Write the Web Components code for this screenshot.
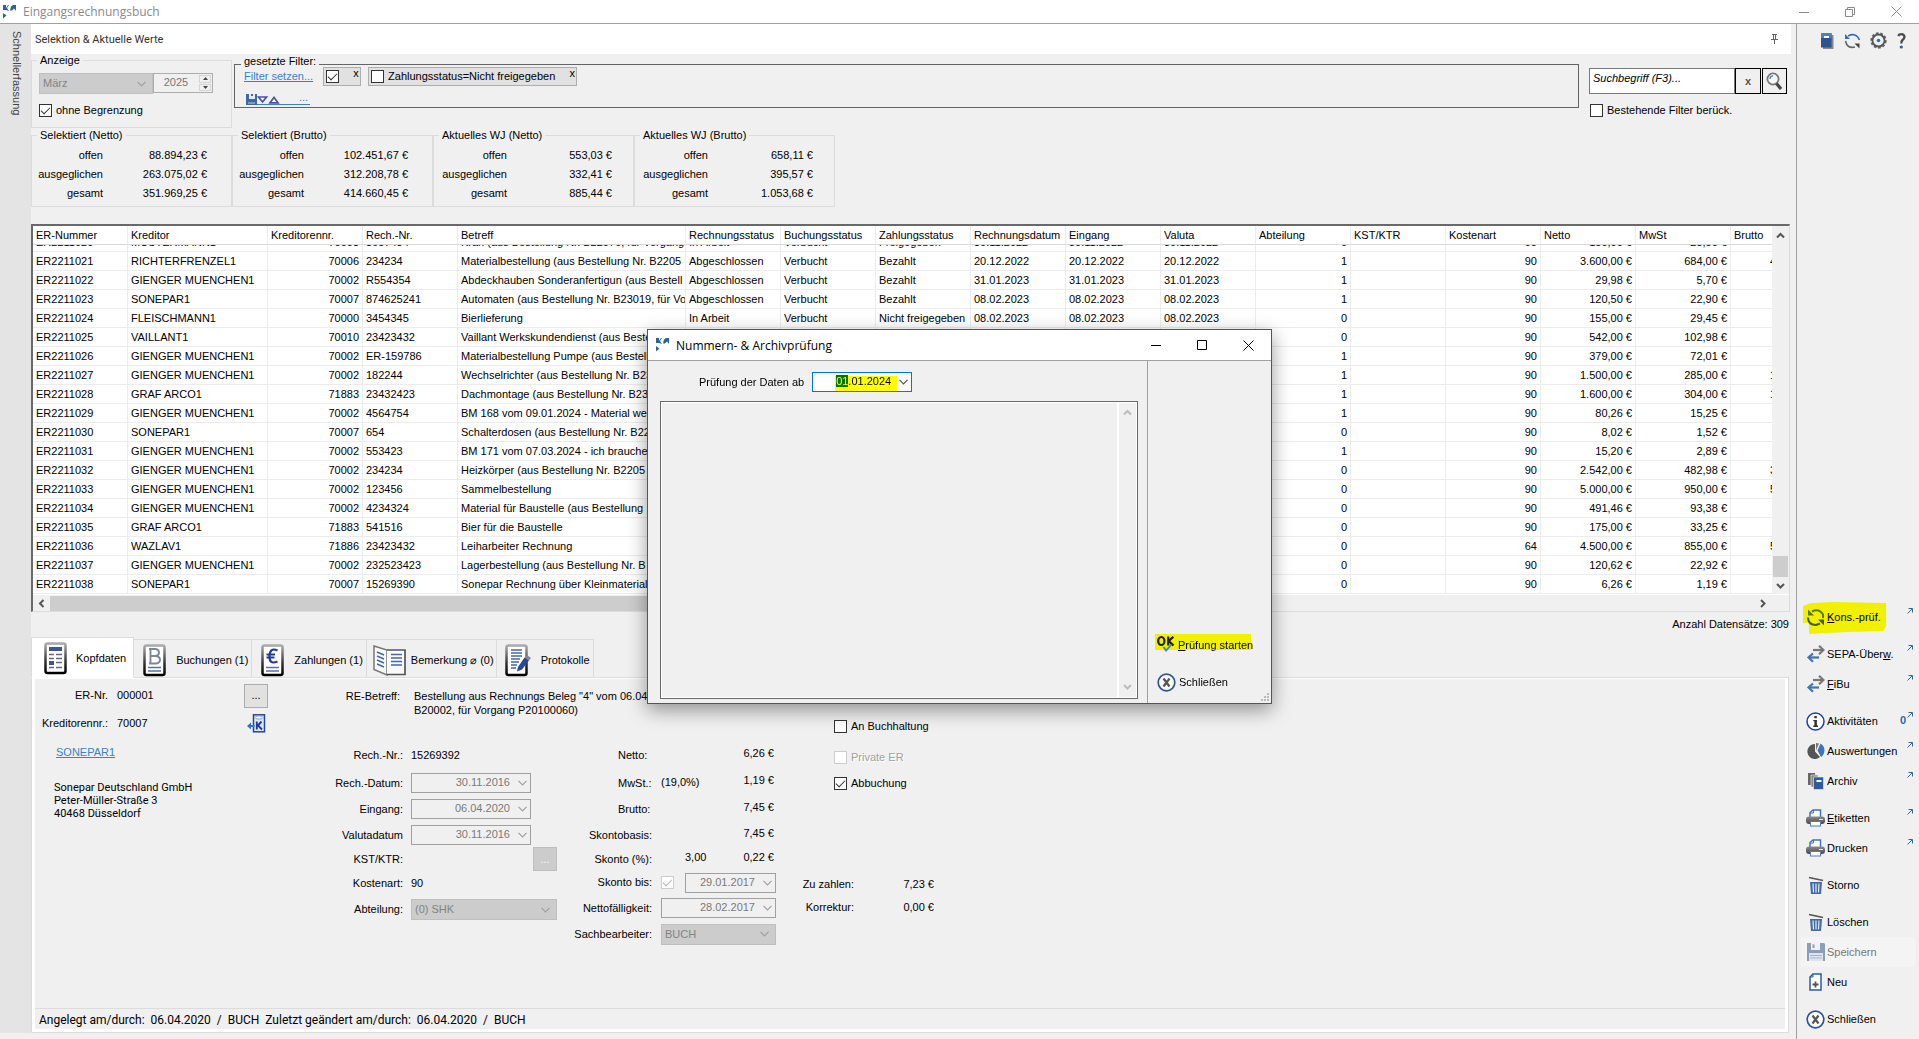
<!DOCTYPE html>
<html lang="de">
<head>
<meta charset="utf-8">
<title>Eingangsrechnungsbuch</title>
<style>
html,body{margin:0;height:100%}
body{font:11px/13px "Liberation Sans",Arial,sans-serif;color:#000;background:#f0f0f0;overflow:hidden}
</style>
</head>
<body>
<invoice-app></invoice-app>
<script>
const BASE = `
*{box-sizing:border-box}
button,input,select,textarea{font:inherit;color:inherit;margin:0;border-radius:0}
button{padding:0;border:0;background:none;cursor:default}
a{color:#3b82c4}
svg{display:block}
fieldset{margin:0;min-width:0;border:1px solid #dcdcdc;padding:0}
legend{padding:0 3px;margin-left:5px;height:13px;line-height:13px}
.check{display:flex;align-items:center;gap:4px;white-space:nowrap}
input[type=checkbox]{appearance:none;width:13px;height:13px;border:1px solid #333;background:#fff;flex:none;display:grid;place-items:center}
input[type=checkbox]:checked::before{content:"";width:8px;height:4px;border:solid #333;border-width:0 0 1px 1px;transform:translateY(-1px) rotate(-45deg)}
input[type=checkbox]:disabled{border-color:#ccc}
input[type=checkbox]:disabled:checked::before{border-color:#b0b0b0}
.drop{display:grid;align-items:center;height:21px;position:relative}
.drop>*{grid-area:1/1}
.drop>app-icon{justify-self:end;margin-right:7px;pointer-events:none;color:#a0a0a0}
.drop select{appearance:none;width:100%;height:100%;border:1px solid #bfbfbf;background:#ccc;color:#838383;padding:0 3px;opacity:1}
.date{height:20px}
.date>app-icon{margin-right:4px}
.date input{width:100%;height:100%;border:1px solid #a0a0a0;background:#f0f0f0;color:#7a7a7a;text-align:right;padding:0 20px 2px 4px;outline:0}
`;
function define(name, css, html, setup){
  const tpl = document.createElement('template');
  tpl.innerHTML = `<style>${BASE}${css}</style>${html}`;
  customElements.define(name, class extends HTMLElement{
    connectedCallback(){
      if(this.shadowRoot) return;
      this.attachShadow({mode:'open'}).append(tpl.content.cloneNode(true));
      if(setup) setup(this, this.shadowRoot);
    }
  });
}

const page = (inner, extra='') => `<svg width="24" height="33" viewBox="0 0 24 33"><defs><linearGradient id="g" x2="0" y2="1"><stop offset="0" stop-color="#aaa"/><stop offset=".6" stop-color="#333"/><stop offset="1" stop-color="#000"/></linearGradient></defs><rect x="1.500" y="1.500" width="20" height="29.500" rx="2" fill="#fff" stroke="url(#g)" stroke-width="2.500"/>${inner}${extra}</svg>`;
const refresh = (a,b) => `<svg width="20" height="19" viewBox="0 0 20 19" fill="none" stroke-width="2"><path d="M6 3.500Q13 0 17 6.500V10" stroke="${a}"/><path d="M2 1.500V7.500H8Z" fill="${a}"/><path d="M2 9.500Q2 17 10 17L14 15.500" stroke="${b}"/><path d="M12 11.500H18V17.500Z" fill="${b}"/></svg>`;
const printer = `<svg width="19" height="18" viewBox="0 0 19 18"><defs><linearGradient id="p" x2="0" y2="1"><stop offset="0" stop-color="#8a8a8a"/><stop offset="1" stop-color="#4a4a4a"/></linearGradient></defs><path d="M4 9V3.500L7 1H14.500V9Z" fill="#fff" stroke="#3f74b5" stroke-width="1.500"/><path d="M7.500 1V4H4" fill="none" stroke="#3f74b5"/><rect x="0" y="7.500" width="19" height="7.500" rx="3" fill="url(#p)"/><rect x="4.500" y="12.500" width="10" height="4.500" fill="#fff" stroke="#4f7fbd"/><rect x="13" y="10" width="4" height="1" fill="#e8e8e8"/></svg>`;
const trash = `<svg width="16" height="19" viewBox="0 0 16 19"><path d="M1 1.500L15 4.500" fill="none" stroke="#555" stroke-width="1.600"/><path d="M2 6H14L13 18H3Z" fill="#3f6aa3"/><path d="M5 7.500L5.500 16.500M8 7.500V16.500M11 7.500L10.500 16.500" stroke="#e8eef6" stroke-width="1.200"/></svg>`;
const swap = `<svg width="18" height="18" viewBox="0 0 18 18" fill="none" stroke-width="2.200"><path d="M6 5H16" stroke="#777"/><path d="M12 .8L16.500 5L12 9.200" stroke="#777"/><path d="M2 12.500H12" stroke="#3f74b5"/><path d="M6 8.500L1.500 12.500L6 16.700" stroke="#3f74b5"/></svg>`;
const closeRound = `<svg width="19" height="19" viewBox="0 0 19 19"><circle cx="9.500" cy="9.500" r="8.300" fill="#fff" stroke="#2d5591" stroke-width="1.700"/><path d="M6.500 5.500L12.500 13.500M12.500 5.500L6.500 13.500" stroke="#555" stroke-width="2.200"/></svg>`;
const ICONS = {
  logo:`<svg width="14" height="14" viewBox="0 0 14 14" fill="#2b6496"><path d="M0 0H3V3L5 0H6L4 3L6 6L3 5H0ZM7 5.500L8 1.500L10 0H13V6L11 3.500L9 5.500ZM0 8L3.500 10.500L0 13.500Z"/></svg>`,
  min:`<svg width="10" height="10" viewBox="0 0 10 10" stroke="currentColor"><path d="M0 5.500H10"/></svg>`,
  restore:`<svg width="10" height="10" viewBox="0 0 10 10" fill="none" stroke="currentColor"><path d="M.5 2.500H7.500V9.500H.5ZM2.500 2.500V.5H9.500V7.500H7.500"/></svg>`,
  max:`<svg width="10" height="10" viewBox="0 0 10 10" fill="none" stroke="currentColor"><path d="M.5 .5H9.500V9.500H.5Z"/></svg>`,
  close:`<svg width="11" height="11" viewBox="0 0 11 11" stroke="currentColor"><path d="M.5 .5L10.500 10.500M10.500 .5L.5 10.500"/></svg>`,
  down:`<svg width="9" height="6" viewBox="0 0 9 6" fill="none" stroke="currentColor" stroke-width="1.200"><path d="M.5 .8L4.500 4.800L8.500 .8"/></svg>`,
  sup:`<svg width="9" height="7" viewBox="0 0 9 7" fill="none" stroke="currentColor" stroke-width="2"><path d="M1 5.500L4.500 2L8 5.500"/></svg>`,
  sdown:`<svg width="9" height="7" viewBox="0 0 9 7" fill="none" stroke="currentColor" stroke-width="2"><path d="M1 1L4.500 4.500L8 1"/></svg>`,
  sleft:`<svg width="7" height="9" viewBox="0 0 7 9" fill="none" stroke="currentColor" stroke-width="2"><path d="M5.500 1L2 4.500L5.500 8"/></svg>`,
  sright:`<svg width="7" height="9" viewBox="0 0 7 9" fill="none" stroke="currentColor" stroke-width="2"><path d="M1 1L4.500 4.500L1 8"/></svg>`,
  pin:`<svg width="7" height="10" viewBox="0 0 7 10" fill="none" stroke="#666"><path d="M1 .5H6M2.500 .5V5M4.500 .5V5M0 5.500H7M3.500 6V10"/></svg>`,
  disk:`<svg width="11" height="11" viewBox="0 0 11 11"><path d="M0 0H11V11H0Z" fill="#3c6a9c"/><rect x="3" y="0" width="6" height="5" fill="#e4ebf2"/><path d="M5 0H7V2H5Z" fill="#3c6a9c"/><rect x="2" y="8" width="7" height="2" fill="#7f9fc0"/></svg>`,
  tris:`<svg width="23" height="8" viewBox="0 0 23 8" fill="#fff" stroke="#4b4fb0" stroke-width="1.700"><path d="M1.500 1H9.500L5.500 6ZM13 6.800L17 1.500L21 6.800Z"/></svg>`,
  search:`<svg width="17" height="19" viewBox="0 0 17 19"><circle cx="7" cy="7" r="5.600" fill="#f6f9fc" stroke="#777" stroke-width="1.800"/><path d="M4 7Q4 4 7 3.800" fill="none" stroke="#4a80bd" stroke-width="1.200"/><path d="M10.500 11.500L15 17" stroke="#444" stroke-width="3.200"/></svg>`,
  book:`<svg width="13" height="16" viewBox="0 0 13 16"><path d="M2 2H12.500V16H2Z" fill="#888"/><rect width="10.500" height="14.500" fill="#2c5590"/><rect width="10.500" height="5" fill="#4f7fbd"/><rect x="3" y="3" width="5" height="2" fill="#fff"/></svg>`,
  refreshTop:`<svg width="17" height="16" viewBox="0 0 17 16" fill="none" stroke-width="1.600"><path d="M4 3Q12 -1 15.500 7" stroke="#3d6ca8"/><path d="M1 1V6H6Z" fill="#3d6ca8"/><path d="M1.500 8Q3 16 11 14" stroke="#666"/><path d="M10.500 10.500H15.500V15.500Z" fill="#444"/></svg>`,
  gear:`<svg width="17" height="17" viewBox="0 0 17 17" fill="none"><circle cx="8.500" cy="8.500" r="7.300" stroke="#666" stroke-width="1.800" stroke-dasharray="2.800 1.700"/><circle cx="8.500" cy="8.500" r="6" stroke="#555" stroke-width="1.800"/><circle cx="8.500" cy="8.500" r="1.800" fill="#2f6db5"/></svg>`,
  help:`<svg width="9" height="16" viewBox="0 0 9 16" fill="none"><path d="M1.200 3Q2 1.200 4.500 1.200T7.500 3.800Q7.500 5.500 5.500 7Q4.300 8 4.300 10.500" stroke="#4a4a4a" stroke-width="2.300"/><circle cx="4.300" cy="14" r="1.600" fill="#2f5f9f"/></svg>`,
  ext:`<svg width="6" height="6" viewBox="0 0 6 6" fill="none" stroke="#336699"><path d="M.5 5.500L5 1M1.500 .5H5.500V4.500"/></svg>`,
  swap, printer, trash, closeRound,
  refreshDark:refresh('#5d7a00','#4d5c00'),
  info:`<svg width="19" height="19" viewBox="0 0 19 19"><circle cx="9.500" cy="9.500" r="8.500" fill="#fff" stroke="#1f3f9a" stroke-width="1.500"/><path d="M8.300 4H10.800V6.300H8.300ZM7.300 8H10.900V13.500H12V15H7.300V13.500H8.400V9.300H7.300Z" fill="#333"/></svg>`,
  pie:`<svg width="18" height="18" viewBox="0 0 18 18"><path d="M8 2A7.500 7.500 0 1 0 13 15L8 9.500Z" fill="#555"/><path d="M9 8.500V1A8 8 0 0 1 12 1.500Z" fill="#777"/><path d="M10.500 8.500L13.500 1.500A8 8 0 0 1 14 15Z" fill="#3f74b5"/></svg>`,
  archive:`<svg width="17" height="18" viewBox="0 0 17 18"><path d="M1 1H8L9 13H1Z" fill="#666"/><path d="M4 3H11V15H4Z" fill="#888" stroke="#eee" stroke-width=".6"/><path d="M6.500 5H16.500V17.500H6.500Z" fill="#2d5c9c" stroke="#e8eef6" stroke-width=".6"/><rect x="9.500" y="8" width="5" height="2" fill="#fff"/></svg>`,
  save:`<svg width="18" height="18" viewBox="0 0 18 18"><path d="M0 0H17L18 1V18H0Z" fill="#8ba0b8"/><rect x="4" y="0" width="9" height="7" fill="#eef1f5"/><rect x="5.500" y="1.500" width="2" height="3.500" fill="#8ba0b8"/><rect x="2" y="10" width="14" height="8" fill="#dde4ec"/><path d="M3 12.500H15M3 15H15" stroke="#a9b9ca"/></svg>`,
  add:`<svg width="13" height="18" viewBox="0 0 13 18"><path d="M4 1H12V17H1V4Z" fill="#fff" stroke="#2d5c9c" stroke-width="1.500"/><path d="M4 1V4H1" fill="none" stroke="#2d5c9c"/><path d="M6.500 8.500V14.500M3.500 11.500H9.500" stroke="#555" stroke-width="1.800"/></svg>`,
  ok:`<svg width="18" height="17" viewBox="0 0 18 17" fill="none"><ellipse cx="4.300" cy="6" rx="3.100" ry="4" stroke="#1c2000" stroke-width="2.200"/><path d="M11.200 1.500V10.500M16.300 1.700L11.800 6L16.500 10.500" stroke="#1c2000" stroke-width="2.200"/><path d="M6.500 12L9 15.500L14.500 9.500" stroke="#3b86b0" stroke-width="1.800"/></svg>`,
  konto:`<svg width="19" height="19" viewBox="0 0 19 19"><rect x="6.500" y=".8" width="11" height="17" fill="#dfe8f6" stroke="#234a86" stroke-width="1.500"/><ellipse cx="12" cy="3.500" rx="4" ry="1.600" fill="#fff" stroke="#7da0d0"/><path d="M9.800 7.500V15.500M14.500 7.500L11 11.500L15 15.500" stroke="#2038a8" stroke-width="1.900" fill="none"/><path d="M0 12L4 8.500V11H7.500V13H4V15.500Z" fill="#2e72d8"/></svg>`,
  grip:`<svg width="9" height="9" viewBox="0 0 9 9" fill="#bbb"><path d="M7 1h2v2h-2zM7 4h2v2h-2zM7 7h2v2h-2zM4 4h2v2h-2zM4 7h2v2h-2zM1 7h2v2h-2z"/></svg>`,
  pKopf:page(`<path d="M5 5H18V9H5Z" fill="#3a559a"/><path d="M5 12.500H10M12 12.500H18M5 16.500H10M12 16.500H18M12 20.500H18M5 25.500H10M12 25.500H18" stroke="#667" stroke-width="1.500"/><rect x="5" y="19" width="5" height="4" fill="#3a559a"/>`),
  pBuch:page(`<path d="M7.500 5V19.500M6 5H12.500Q16 5.500 16 8.500T12.500 12H7.500M12.500 12Q17 12.500 17 15.700T13 19.500H6" fill="none" stroke="#7d879c" stroke-width="1.900"/><path d="M5 23.500H18M5 27H18" stroke="#5a70a8" stroke-width="1.500"/>`),
  pZahl:page(`<path d="M16.500 6.500Q9 3 8.500 12T16.500 17.500M5.500 10.500H14M5.500 13.500H13.500" fill="none" stroke="#223a96" stroke-width="2.200"/><path d="M5 23.500H18M5 27H18" stroke="#5a70a8" stroke-width="1.500"/>`),
  pBem:`<svg width="33" height="31" viewBox="0 0 33 31" fill="none"><path d="M1 1L14 5V30L1 24.500Z" fill="#fafafa" stroke="#777" stroke-width="1.500"/><path d="M14 5H32V29.500H14" fill="#fafafa" stroke="#555" stroke-width="1.700"/><path d="M4 7L11 10M4 11L11 14M4 15L11 18M4 19L11 22M18 9.500H29M18 13H29M18 16.500H29M18 20H29" stroke="#4467a5" stroke-width="1.400"/></svg>`,
  pProt:page(`<path d="M6 6H17M6 9H17M6 12H17M6 15H15M6 18H14M6 21H12M6 24H11" stroke="#4467a5" stroke-width="1.400"/>`,`<path d="M13 23L19.500 13.500L24 16.500L17 25.500L12 27.500Z" fill="#2c4698"/><path d="M19.500 13.500L22 11L26 14L24 16.500Z" fill="#888"/>`).replace('width="24"','width="27"').replace('0 0 24 33','0 0 27 33'),
};
define('app-icon', `:host{display:block;flex:none}`, ``, (el,root)=>{
  root.append(document.createRange().createContextualFragment(ICONS[el.getAttribute('name')]));
});

define('window-bar', `
:host{display:flex;align-items:center;background:#fff;border-bottom:1px solid #a0a0a0;font-family:"Open Sans","Noto Sans",sans-serif;font-size:12px}
.t{flex:1;padding-left:6px;white-space:nowrap}
.b{display:flex;align-items:center}
button{width:46px;height:22px;display:grid;place-items:center}
`, `<app-icon name="logo"></app-icon><span class="t"><slot></slot></span><span class="b"><button aria-label="Minimieren"><app-icon name="min"></app-icon></button><button aria-label="Fenster" class="mid"></button><button aria-label="Schließen"><app-icon name="close"></app-icon></button></span>`,
(el,root)=>{ root.querySelector('.mid').innerHTML = `<app-icon name="${el.getAttribute('mid')}"></app-icon>`; });

define('quick-strip', `
:host{display:block;width:31px;background:#e4e4e4;padding:7px 0 0 9px;color:#444;margin-bottom:6px}
span{writing-mode:vertical-rl;line-height:15px}
`, `<span>Schnellerfassung</span>`);

define('sum-box', `
:host{display:block;width:201px}
fieldset{padding:4px 0 3px;height:78px}
dl{margin:0;display:grid;grid-template-columns:71px 1fr;grid-auto-rows:19px;align-items:center;text-align:right;padding-right:24px}
:host([wide]) dl{grid-template-columns:73px 1fr;padding-right:21px}
dd{margin:0}
`, `<fieldset><legend></legend><dl></dl></fieldset>`, (el,root)=>{
  root.querySelector('legend').textContent = el.getAttribute('title');
  const v = el.getAttribute('values').split('|');
  root.querySelector('dl').innerHTML = ['offen','ausgeglichen','gesamt'].map((k,i)=>`<dt>${k}</dt><dd>${v[i]}</dd>`).join('');
});

define('selection-panel', `
:host{display:block}
header{height:30px;background:#fff;display:flex;align-items:center;justify-content:space-between;padding:0 13px 0 4px;font:11px/15px Roboto,sans-serif;color:#333}
.top{display:flex;padding-right:4px;height:75px;align-items:flex-start}
.anz{width:201px;height:74px;padding:6px 0 0 7px}
.anz legend{margin-left:-2px}
.row{display:flex;margin-bottom:10px}
.drop{width:114px}
.spin{display:flex;width:60px;height:20px;border:1px solid #adadad;color:#777}
.spin input{width:44px;border:0;background:#f0f0f0;text-align:center;padding:0 0 1px}
.spin span{flex:1;display:grid;grid-template-rows:1fr 1fr;padding:1px;gap:1px}
.spin button{border:1px solid #d4d4d4;display:grid;place-items:center}
.flt{flex:1;margin:1px 10px 0 2px;height:53px;border-color:#646464;padding:0 9px}
.flt legend{margin-left:-3px;height:18px}
.chips{display:flex;height:20px;align-items:center;margin-top:-7px}
.chip{display:flex;align-items:center;border:1px solid #adadad;background:#e1e1e1;height:19px;padding:0 0 0 2px;margin-left:7px}
.chip button{align-self:flex-start;line-height:10px;padding-bottom:2px;width:8px;margin-left:13px}
.chip:first-of-type{margin-left:10px}
.tools{display:flex;align-items:flex-end;margin-top:6px;height:13px;padding-left:2px}
.tools a{display:flex;align-items:flex-end;gap:4px;border-bottom:1px solid #3b82c4;text-decoration:none;line-height:9px}
.tools i{font-style:normal;padding:0 2px 2px 15px;display:block}
.find{width:198px;padding-top:14px}
.find form{display:flex;height:26px;margin-bottom:10px}
.find input[type=text]{flex:1;min-width:0;border:1px solid #7a7a7a;background:#fff;font-style:italic;padding:0 3px 6px}
.find input::placeholder{color:#000;opacity:1}
.find button{width:26px;border:1px solid #000;display:grid;place-items:center;font-weight:bold;color:#555}
.find button+button{margin-left:1px;width:25px}
.find .check{padding-left:1px}
.sums{display:flex}
`, `<header><span>Selektion &amp; Aktuelle Werte</span><app-icon name="pin"></app-icon></header>
<div class="top">
<fieldset class="anz"><legend>Anzeige</legend>
<div class="row"><span class="drop"><select aria-label="Monat" disabled><option>März</option></select><app-icon name="down"></app-icon></span>
<span class="spin"><input type="text" aria-label="Jahr" value="2025" disabled><span><button aria-label="mehr" disabled><svg width="5" height="3"><path d="M0 3L2.500 0L5 3Z" fill="#444"/></svg></button><button aria-label="weniger" disabled><svg width="5" height="3"><path d="M0 0L2.500 3L5 0Z" fill="#444"/></svg></button></span></span></div>
<label class="check"><input type="checkbox" checked>ohne Begrenzung</label></fieldset>
<fieldset class="flt"><legend>gesetzte Filter:</legend>
<div class="chips"><a href="#">Filter setzen...</a><span class="chip"><input type="checkbox" aria-label="alle Filter" checked><button>x</button></span><span class="chip"><label class="check"><input type="checkbox">Zahlungsstatus=Nicht freigegeben</label><button>x</button></span></div>
<div class="tools"><app-icon name="disk"></app-icon><a href="#"><app-icon name="tris"></app-icon><i>...</i></a></div></fieldset>
<div class="find"><form onsubmit="return false"><input type="text" aria-label="Suchbegriff" placeholder="Suchbegriff (F3)..."><button type="button">x</button><button aria-label="Suchen"><app-icon name="search"></app-icon></button></form>
<label class="check"><input type="checkbox">Bestehende Filter berück.</label></div>
</div>
<div class="sums"><sum-box title="Selektiert (Netto)" values="88.894,23 €|263.075,02 €|351.969,25 €"></sum-box><sum-box title="Selektiert (Brutto)" values="102.451,67 €|312.208,78 €|414.660,45 €"></sum-box><sum-box wide title="Aktuelles WJ (Netto)" values="553,03 €|332,41 €|885,44 €"></sum-box><sum-box wide title="Aktuelles WJ (Brutto)" values="658,11 €|395,57 €|1.053,68 €"></sum-box></div>`);

const COLS = [['ER-Nummer',95],['Kreditor',140],['Kreditorennr.',95,1],['Rech.-Nr.',95],['Betreff',228],['Rechnungsstatus',95],['Buchungsstatus',95],['Zahlungsstatus',95],['Rechnungsdatum',95],['Eingang',95],['Valuta',95],['Abteilung',95,1],['KST/KTR',95],['Kostenart',95,1],['Netto',95,1],['MwSt',95,1],['Brutto',95,1]];
const G='GIENGER MUENCHEN1', A='Abgeschlossen|Verbucht|Bezahlt|', NONE='|||||';
const ROWS = [
`MUSTERMANN1|70003|3657434|Kran (aus Bestellung Nr. B22076, für Vorgang|In Arbeit|Verbucht|Freigegeben|30.11.2022|30.11.2022|30.11.2022|0||90|150,00|28,50|178,50`,
`RICHTERFRENZEL1|70006|234234|Materialbestellung (aus Bestellung Nr. B2205|${A}20.12.2022|20.12.2022|20.12.2022|1||90|3.600,00|684,00|4.284,00`,
`${G}|70002|R554354|Abdeckhauben Sonderanfertigun (aus Bestell|${A}31.01.2023|31.01.2023|31.01.2023|1||90|29,98|5,70|35,68`,
`SONEPAR1|70007|874625241|Automaten (aus Bestellung Nr. B23019, für Vo|${A}08.02.2023|08.02.2023|08.02.2023|1||90|120,50|22,90|143,40`,
`FLEISCHMANN1|70000|3454345|Bierlieferung|In Arbeit|Verbucht|Nicht freigegeben|08.02.2023|08.02.2023|08.02.2023|0||90|155,00|29,45|184,45`,
`VAILLANT1|70010|23423432|Vaillant Werkskundendienst (aus Bestellung|${NONE}|0||90|542,00|102,98|644,98`,
`${G}|70002|ER-159786|Materialbestellung Pumpe (aus Bestellung|${NONE}|1||90|379,00|72,01|451,01`,
`${G}|70002|182244|Wechselrichter (aus Bestellung Nr. B23|${NONE}|1||90|1.500,00|285,00|1.785,00`,
`GRAF ARCO1|71883|23432423|Dachmontage (aus Bestellung Nr. B23|${NONE}|1||90|1.600,00|304,00|1.904,00`,
`${G}|70002|4564754|BM 168 vom 09.01.2024 - Material wenig|${NONE}|1||90|80,26|15,25|95,51`,
`SONEPAR1|70007|654|Schalterdosen (aus Bestellung Nr. B22|${NONE}|0||90|8,02|1,52|9,54`,
`${G}|70002|553423|BM 171 vom 07.03.2024 - ich brauche|${NONE}|1||90|15,20|2,89|18,09`,
`${G}|70002|234234|Heizkörper (aus Bestellung Nr. B2205|${NONE}|0||90|2.542,00|482,98|3.024,98`,
`${G}|70002|123456|Sammelbestellung|${NONE}|0||90|5.000,00|950,00|5.950,00`,
`${G}|70002|4234324|Material für Baustelle (aus Bestellung|${NONE}|0||90|491,46|93,38|584,84`,
`GRAF ARCO1|71883|541516|Bier für die Baustelle|${NONE}|0||90|175,00|33,25|208,25`,
`WAZLAV1|71886|23423432|Leiharbeiter Rechnung|${NONE}|0||64|4.500,00|855,00|5.355,00`,
`${G}|70002|232523423|Lagerbestellung (aus Bestellung Nr. B|${NONE}|0||90|120,62|22,92|143,54`,
`SONEPAR1|70007|15269390|Sonepar Rechnung über Kleinmaterial|${NONE}|0||90|6,26|1,19|7,45`];
define('invoice-grid', `
:host{display:block;margin-top:17px}
.frame{display:grid;grid-template-columns:minmax(0,1fr) 17px;border:1px solid #dcdcdc;border-top:2px solid #696969;border-left:2px solid #696969;background:#fff;margin-right:1px}
.view{height:368px;overflow:hidden}
table{table-layout:fixed;border-collapse:separate;border-spacing:0}
th,td{height:19px;padding:0 3px;border-right:1px solid #ececec;border-bottom:1px solid #ececec;white-space:nowrap;overflow:hidden;font-weight:normal;text-align:left}
th{position:sticky;top:0;background:#fff;border-bottom-color:#d8d8d8}
td.r{text-align:right}
.v{background:#f0f0f0;display:flex;flex-direction:column;justify-content:space-between;align-items:center;padding:6px 0 4px;color:#555}
.v i{margin-top:auto;width:15px;height:21px;background:#cdcdcd;margin-bottom:6px}
.h{grid-column:1/3;height:17px;background:#f0f0f0;border-top:1px solid #fff;display:flex;align-items:center;padding:0 22px 0 5px;gap:5px;color:#555}
.h i{width:58%;height:15px;background:#cdcdcd;margin-right:auto}
p{margin:3px 2px 0;text-align:right;line-height:15px;padding-top:2px}
`, `<div class="frame"><div class="view"><table><colgroup></colgroup><thead><tr></tr></thead><tbody></tbody></table></div><div class="v"><app-icon name="sup"></app-icon><i></i><app-icon name="sdown"></app-icon></div><div class="h"><app-icon name="sleft"></app-icon><i></i><app-icon name="sright"></app-icon></div></div><p>Anzahl Datensätze: 309</p>`,
(el,root)=>{
  const q = s => root.querySelector(s);
  q('table').style.width = COLS.reduce((s,c)=>s+c[1],0)+'px';
  q('colgroup').innerHTML = COLS.map(c=>`<col style="width:${c[1]}px">`).join('');
  q('thead tr').innerHTML = COLS.map(c=>`<th scope="col">${c[0]}</th>`).join('');
  q('tbody').innerHTML = ROWS.map((r,i)=>`<tr>${[`ER22110${20+i}`,...r.split('|')].map((v,j)=>`<td${COLS[j][2]?' class="r"':''}>${v}${j>13?' €':''}</td>`).join('')}</tr>`).join('');
  q('.view').scrollTop = 12;
});

define('tab-bar', `
:host{display:flex;align-items:flex-end;padding-top:5px;height:46px;margin-bottom:-1px;position:relative}
button{display:flex;align-items:center;border:1px solid #dcdcdc;border-left:0;height:39px;gap:9px;padding:4px 3px 0 9px;white-space:nowrap}
button.on{background:#fff;border-left:1px solid #dcdcdc;border-bottom-color:#fff;height:41px;padding:2px 7px 0 12px;gap:8px}
.w{padding-left:6px;padding-right:2px;gap:5px}
.p{padding-left:8px}
`, `<button class="on"><app-icon name="pKopf"></app-icon>Kopfdaten</button><button><app-icon name="pBuch"></app-icon>Buchungen (1)</button><button><app-icon name="pZahl"></app-icon>Zahlungen (1)</button><button class="w"><app-icon name="pBem"></app-icon>Bemerkung ⌀ (0)</button><button class="p"><app-icon name="pProt"></app-icon>Protokolle</button>`);

const date = (id,v) => `<span class="drop date"><input type="text" id="${id}" value="${v}" disabled><app-icon name="down"></app-icon></span>`;
define('detail-form', `
:host{flex:1;display:flex;flex-direction:column;border:1px solid #dcdcdc;background:#f0f0f0;margin:0 2px 6px 0;outline:0}
.in{flex:1;display:flex;flex-direction:column;border:3px solid #fff;border-top-width:1px}
.cols{flex:1;display:flex;align-items:flex-start}
.l{width:268px;padding-top:4px}
.kv{display:grid;grid-template-columns:73px 118px 24px;column-gap:9px;grid-template-rows:25px 30px;align-items:center}
.kv>:nth-child(3n+1){text-align:right}
.kv app-icon{justify-self:center}
.dots{height:24px;width:24px;border:1px solid #adadad;background:#e1e1e1}
.dots:disabled{background:#ccc;border-color:#bfbfbf;color:#fff}
.link{display:block;margin:8px 0 22px 21px}
address{font:11px/13px Roboto,sans-serif;margin-left:19px}
.m{padding-top:10px}
.subj{display:grid;grid-template-columns:97px 260px;column-gap:14px;line-height:14px;margin-bottom:24px;height:28px}
.subj span{white-space:nowrap}
.subj label,.a>label,.a>.k,.b>label,.b>.k{text-align:right}
.grids{display:flex}
.a{display:grid;grid-template-columns:100px 146px;column-gap:8px;grid-template-rows:29px 26px 26px 26px 22px 26px 27px;align-items:center}
.a .date{width:120px}
.a .dots{justify-self:end}
.b{display:grid;grid-template-columns:95px 115px;column-gap:9px;grid-template-rows:29px 26px 26px 26px 22px 25px 26px 26px;align-items:center}
.b>.n{text-align:left;padding-left:61px}
.v{display:flex;justify-content:space-between;padding:0 2px 4px 0}
.v i{font-style:normal;padding-top:2px}
.v i.s{padding:0 0 0 24px}
.bis{display:grid;grid-template-columns:13px 91px;column-gap:11px;align-items:center}
.c{padding-top:32px}
.c .check{height:31px;margin-left:58px}
.c .check:nth-child(3){height:21px;margin-bottom:79px}
.off{color:#a0a0a0;text-shadow:1px 1px #fff}
.tot{display:grid;grid-template-columns:78px 80px;grid-auto-rows:23px;align-items:center;text-align:right}
footer{border-top:1px solid #dcdcdc;height:21px;padding:3px 0 0 4px;font:12px/16px Roboto,sans-serif;white-space:pre}
`, `<div class="in"><div class="cols">
<div class="l"><div class="kv"><span>ER-Nr.</span><span>000001</span><button class="dots">...</button><span>Kreditorennr.:</span><span>70007</span><app-icon name="konto"></app-icon></div>
<a class="link" href="#">SONEPAR1</a><address>Sonepar Deutschland GmbH<br>Peter-Müller-Straße 3<br>40468 Düsseldorf</address></div>
<div class="m"><div class="subj"><label>RE-Betreff:</label><span>Bestellung aus Rechnungs Beleg "4" vom 06.04.2020<br>B20002, für Vorgang P20100060)</span></div>
<div class="grids"><div class="a">
<span class="k">Rech.-Nr.:</span><span>15269392</span>
<label for="rd">Rech.-Datum:</label>${date('rd','30.11.2016')}
<label for="eg">Eingang:</label>${date('eg','06.04.2020')}
<label for="vd">Valutadatum</label>${date('vd','30.11.2016')}
<label for="kst">KST/KTR:</label><button id="kst" class="dots" disabled>...</button>
<span class="k">Kostenart:</span><span>90</span>
<label for="abt">Abteilung:</label><span class="drop"><select id="abt" disabled><option>(0) SHK</option></select><app-icon name="down"></app-icon></span>
</div><div class="b">
<span class="k n">Netto:</span><span class="v"><i></i>6,26 €</span>
<span class="k n">MwSt.:</span><span class="v"><i>(19,0%)</i>1,19 €</span>
<span class="k n">Brutto:</span><span class="v"><i></i>7,45 €</span>
<span class="k">Skontobasis:</span><span class="v"><i></i>7,45 €</span>
<span class="k">Skonto (%):</span><span class="v"><i class="s">3,00</i>0,22 €</span>
<label for="sb">Skonto bis:</label><span class="bis"><input type="checkbox" aria-label="Skonto aktiv" checked disabled>${date('sb','29.01.2017')}</span>
<label for="nf">Nettofälligkeit:</label>${date('nf','28.02.2017')}
<label for="sa">Sachbearbeiter:</label><span class="drop"><select id="sa" disabled><option>BUCH</option></select><app-icon name="down"></app-icon></span>
</div></div></div>
<div class="c"><label class="check"><input type="checkbox">An Buchhaltung</label><label class="check off"><input type="checkbox" disabled>Private ER</label><label class="check"><input type="checkbox" checked>Abbuchung</label>
<div class="tot"><span>Zu zahlen:</span><span>7,23 €</span><span>Korrektur:</span><span>0,00 €</span></div></div>
</div><footer>Angelegt am/durch:  06.04.2020  /  BUCH  Zuletzt geändert am/durch:  06.04.2020  /  BUCH</footer></div>`);

define('action-item', `
:host{display:block;height:30px;position:relative}
:host([gap]){margin-bottom:7px}
:host([off]){background:#f4f4f4;color:#777;margin:0 4px}
:host([off]) button{padding-left:5px}
button{display:flex;align-items:center;width:100%;height:100%;padding:0 6px 0 9px;gap:2px;text-align:left;position:relative}
.i{width:19px;display:grid;place-items:center}
.x{margin-left:auto;margin-bottom:12px;display:flex;gap:1px;height:6px}
.x b{color:#336699;line-height:16px}
.hl{position:absolute;left:6px;top:0}
`, `<button><span class="i"></span><span><slot></slot></span></button>`, (el,root)=>{
  root.querySelector('.i').innerHTML = `<app-icon name="${el.getAttribute('icon')}"></app-icon>`;
  const b = root.querySelector('button');
  if(el.hasAttribute('ext')) b.insertAdjacentHTML('beforeend', `<span class="x">${el.getAttribute('ext')?`<b>${el.getAttribute('ext')}</b>`:''}<app-icon name="ext"></app-icon></span>`);
  if(el.hasAttribute('mark')) b.insertAdjacentHTML('beforebegin', `<svg class="hl" width="83" height="32" viewBox="0 0 83 32"><path d="M0 4L8 1L30 0L83 1V24L80 29L44 30L6 32V21H0Z" fill="#f0f000"/></svg>`);
});
define('action-bar', `
:host{display:flex;flex-direction:column;width:123px;border-left:1px solid #a0a0a0;padding-bottom:5px}
nav{display:flex;align-items:center;justify-content:space-between;padding:8px 13px 0 24px;height:25px}
nav button{display:block}
.list{margin-top:auto}
u{text-underline-offset:1px}
`, `<nav><button aria-label="Handbuch"><app-icon name="book"></app-icon></button><button aria-label="Aktualisieren"><app-icon name="refreshTop"></app-icon></button><button aria-label="Einstellungen"><app-icon name="gear"></app-icon></button><button aria-label="Hilfe"><app-icon name="help"></app-icon></button></nav>
<div class="list">
<action-item icon="refreshDark" ext mark gap><u>K</u>ons.-prüf.</action-item>
<action-item icon="swap" ext>SEPA-Über<u>w</u>.</action-item>
<action-item icon="swap" ext gap><u>F</u>iBu</action-item>
<action-item icon="info" ext="0">Aktivitäten</action-item>
<action-item icon="pie" ext>Auswertungen</action-item>
<action-item icon="archive" ext gap>Archiv</action-item>
<action-item icon="printer" ext><u>E</u>tiketten</action-item>
<action-item icon="printer" ext gap>Drucken</action-item>
<action-item icon="trash" gap>Storno</action-item>
<action-item icon="trash">Löschen</action-item>
<action-item icon="save" off>Speichern</action-item>
<action-item icon="add" gap>Neu</action-item>
<action-item icon="closeRound">Schließen</action-item>
</div>`);

define('check-dialog', `
:host{display:flex;flex-direction:column;position:absolute;left:0;right:0;margin:0 auto;top:329px;width:625px;height:375px;background:#f0f0f0;border:1px solid #555;box-shadow:0 6px 18px rgba(0,0,0,.4)}
window-bar{height:31px;padding-left:8px}
.body{flex:1;display:flex}
.l{flex:1;display:flex;flex-direction:column;padding:11px 9px 4px 12px}
.q{display:flex;align-items:center;gap:8px;padding-left:39px;margin-bottom:9px}
.q .date{width:100px}
.q .date input{border-color:#0078d7;color:#000;background:linear-gradient(#ff0,#ff0) 22px 3px/62px 15px no-repeat #fff}
.q app-icon{color:#555}
input::selection{background:#007800;color:#ff0}
.out{flex:1;display:flex;border:1px solid #696969;position:relative}
textarea{flex:1;resize:none;border:1px solid #fff;background:#f0f0f0;outline:0}
.sb{width:19px;border:1px solid #fff;display:flex;flex-direction:column;justify-content:space-between;align-items:center;padding:6px 0;color:#bbb}
.r{width:124px;border-left:1px solid #a0a0a0;display:flex;flex-direction:column;justify-content:flex-end;padding:0 4px 11px 7px;position:relative}
.r button{display:flex;align-items:center;gap:3px;height:20px;padding-left:2px;white-space:nowrap}
.r button:first-child{height:18px;margin-bottom:20px;background:linear-gradient(#f0f000,#f0f000) 0 0/96px 16px no-repeat}
.r button:first-child span{padding-top:4px}
.r>app-icon{position:absolute;right:2px;bottom:2px}
`, `<window-bar mid="max">Nummern- &amp; Archivprüfung</window-bar>
<div class="body"><div class="l"><div class="q"><label for="ab">Prüfung der Daten ab</label><span class="drop date"><input type="text" id="ab" value="01.01.2024"><app-icon name="down"></app-icon></span></div>
<div class="out"><textarea aria-label="Prüfergebnis" readonly></textarea><span class="sb"><app-icon name="sup"></app-icon><app-icon name="sdown"></app-icon></span></div></div>
<div class="r"><button><app-icon name="ok"></app-icon><span><u>P</u>rüfung starten</span></button><button><app-icon name="closeRound"></app-icon>Schließen</button><app-icon name="grip"></app-icon></div></div>`,
(el,root)=>{ const i = root.getElementById('ab'); i.focus(); i.setSelectionRange(0,2); });

define('invoice-app', `
:host{display:flex;flex-direction:column;height:100vh;position:relative}
.main-bar{height:24px;padding-left:3px;color:#8a8a8a}
.work{flex:1;display:flex;min-height:0}
main{flex:1;min-width:0;display:flex;flex-direction:column;padding-right:5px}
`, `<window-bar class="main-bar" mid="restore">Eingangsrechnungsbuch</window-bar>
<div class="work"><quick-strip></quick-strip><main><selection-panel></selection-panel><invoice-grid></invoice-grid><tab-bar></tab-bar><detail-form></detail-form></main><action-bar></action-bar></div>
<check-dialog role="dialog" aria-label="Nummern- &amp; Archivprüfung"></check-dialog>`);
</script>
</body>
</html>
